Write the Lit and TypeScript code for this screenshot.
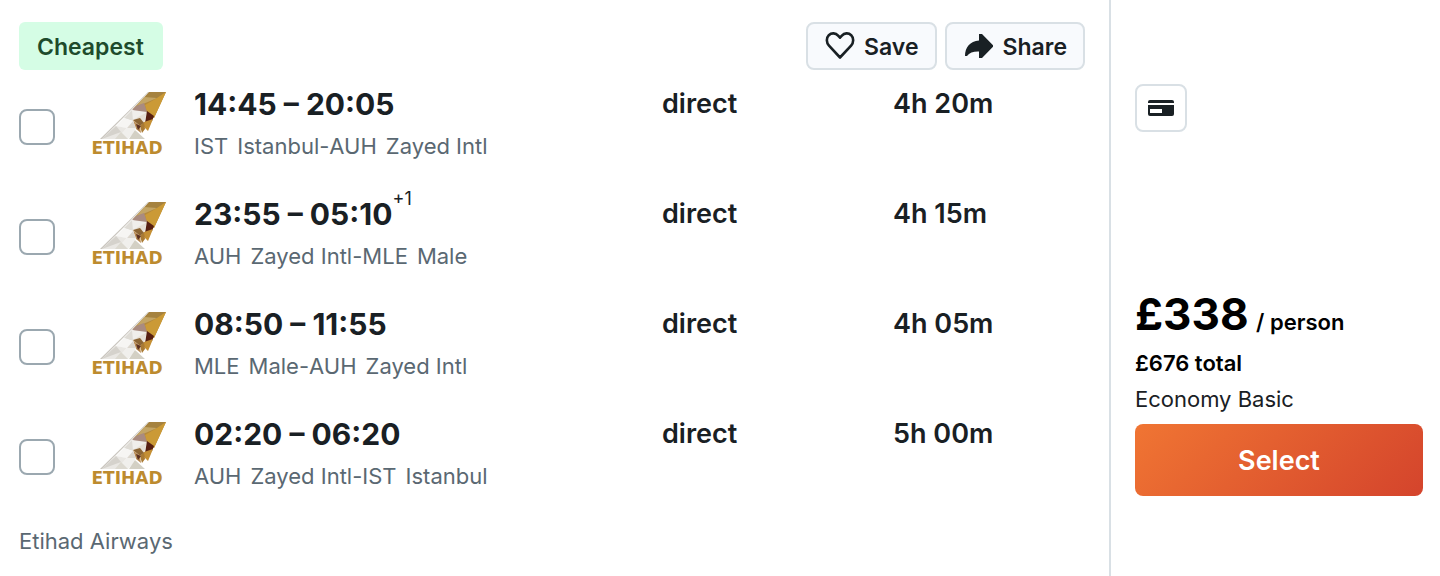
import { LitElement, html, css, svg, nothing } from "lit";
import { customElement, property } from "lit/decorators.js";

interface Leg {
  depart: string;
  arrive: string;
  plusDays?: number;
  from: string[];
  to: string[];
  duration: string;
}

const LEGS: Leg[] = [
  { depart: "14:45", arrive: "20:05", from: ["IST", "Istanbul"], to: ["AUH", "Zayed Intl"], duration: "4h 20m" },
  { depart: "23:55", arrive: "05:10", plusDays: 1, from: ["AUH", "Zayed Intl"], to: ["MLE", "Male"], duration: "4h 15m" },
  { depart: "08:50", arrive: "11:55", from: ["MLE", "Male"], to: ["AUH", "Zayed Intl"], duration: "4h 05m" },
  { depart: "02:20", arrive: "06:20", from: ["AUH", "Zayed Intl"], to: ["IST", "Istanbul"], duration: "5h 00m" },
];

// Facets of the airline's tail fin: [points, fill]
const FACETS: [string, string][] = [
  ["62,0 79,0 67,26 60,22 58,17 46,17", "#b5893c"],
  ["62,0 79,0 70,6 57,7 61,1", "#a5823f"],
  ["57,5 70,6 56,12 49,14", "#c3a566"],
  ["79,0 67,26 60,20 58,13 70,6", "#cb9a36"],
  ["49,14 57,11 60,20 50,20 45,18", "#a98b80"],
  ["45,18 60,20 46,29 37,26", "#f0eeeb"],
  ["45,18 46,29 37,26", "#dedbd5"],
  ["60,20 57,31 46,28", "#e6dfd6"],
  ["60,19 67,24 65,29 58,31", "#571f12"],
  ["57,30 66,27 61,39 57,35", "#c48f34"],
  ["46,28 53,26 57,31 53,34", "#8c6534"],
  ["53,34 57,30 58,37 55,41", "#a97a33"],
  ["46,28 53,34 54,41 49,37", "#b98c55"],
  ["49,32 54,34 51,38", "#5c3020"],
  ["37,26 46,29 40,36 29,34", "#f6f5f3"],
  ["46,29 49,36 40,36", "#dcd7cf"],
  ["29,34 40,36 30,47 15,47", "#e9e7e3"],
  ["29,34 34,40 15,47", "#d5d2cc"],
  ["40,36 49,36 45,43 41,47 30,47", "#f0efec"],
  ["34,40 41,47 28,47", "#dcd9d0"],
  ["48,38 58,47 42,47", "#d3d0c4"],
  ["62,0 61,0 13,47 15,47", "#c9c5be"],
];

@customElement("airline-logo")
class AirlineLogo extends LitElement {
  static styles = css`
    :host { display: block; }
    .logo { display: block; width: 80px; height: 70px; }
    .word { font: 700 17px "DejaVu Sans", sans-serif; fill: #bd8b2f; }
  `;
  render() {
    return html`<svg class="logo" viewBox="0 0 80 70" role="img" aria-label="Etihad">
      ${FACETS.map(([points, fill]) => svg`<polygon points=${points} fill=${fill}></polygon>`)}
      <text class="word" x="40" y="62" text-anchor="middle">ETIHAD</text>
    </svg>`;
  }
}

@customElement("flight-leg")
class FlightLeg extends LitElement {
  @property({ attribute: false }) leg!: Leg;

  static styles = css`
    :host { display: block; }
    .leg {
      display: grid;
      grid-template-columns: 36px 112px minmax(0, 1fr) 231px 192px;
      padding: 11px 0 15px;
    }
    .pick {
      appearance: none;
      box-sizing: border-box;
      width: 36px;
      height: 36px;
      margin: 26px 0 0;
      border: 2px solid #9ba8b0;
      border-radius: 8px;
      background: #fff;
    }
    .pick:checked { background: #192024; }
    .brand { margin: 9px 0 0 32px; }
    .info { padding-left: 27px; }
    .line { height: 42px; line-height: 42px; color: #192024; white-space: nowrap; }
    .times { font-size: 30px; font-weight: 700; }
    .fact { font-size: 27px; font-weight: 600; }
    .plus { font-size: 18px; font-weight: 400; line-height: 0; vertical-align: 20px; }
    .route { display: flex; font-size: 22px; color: #5a6872; }
    .place { display: flex; gap: 9px; }
  `;

  render() {
    const { depart, arrive, plusDays, from, to, duration } = this.leg;
    return html`<div class="leg">
      <input class="pick" type="checkbox" aria-label="Select flight ${depart} – ${arrive}" />
      <airline-logo class="brand"></airline-logo>
      <div class="info">
        <div class="line times">${depart} – ${arrive}${plusDays ? html`<sup class="plus">+${plusDays}</sup>` : nothing}</div>
        <div class="line route">
          <span class="place">${from.map((t) => html`<span>${t}</span>`)}</span>-<span class="place">${to.map((t) => html`<span>${t}</span>`)}</span>
        </div>
      </div>
      <div class="line fact">direct</div>
      <div class="line fact">${duration}</div>
    </div>`;
  }
}

@customElement("app-root")
class AppRoot extends LitElement {
  static styles = css`
    :host {
      display: block;
      font-family: Inter, "Liberation Sans", sans-serif;
      color: #192024;
      background: #fff;
    }
    button { font: inherit; color: inherit; cursor: pointer; box-sizing: border-box; }
    .card { display: grid; grid-template-columns: minmax(0, 1fr) 331px; min-height: 100vh; }
    .main { padding: 22px 24px 0 19px; }
    .head { display: flex; align-items: center; gap: 8px; height: 48px; margin-bottom: 2px; }
    .badge {
      margin-right: auto;
      padding: 2px 19px 0 18px;
      line-height: 46px;
      border-radius: 6px;
      background: #d5fde5;
      color: #1e4b2c;
      font-size: 23px;
      font-weight: 600;
    }
    .action {
      display: flex;
      align-items: center;
      gap: 8px;
      height: 48px;
      padding: 0 16px;
      border: 2px solid #d9e0e5;
      border-radius: 8px;
      background: #f8fafd;
      font-size: 23px;
      font-weight: 600;
    }
    .action span { padding-top: 2px; }
    .glyph { display: block; flex: none; }
    .carrier { margin: 11px 0 0; line-height: 36px; font-size: 22px; color: #5a6872; }
    .side {
      display: flex;
      flex-direction: column;
      justify-content: space-between;
      border-left: 2px solid #d9e0e5;
      padding: 84px 17px 80px 24px;
    }
    .payment {
      display: grid;
      place-items: center;
      width: 52px;
      height: 48px;
      padding: 0;
      border: 2px solid #d9e0e5;
      border-radius: 8px;
      background: #fff;
    }
    .price { margin: 0; color: #000; font-weight: 600; font-size: 22px; line-height: 46px; white-space: nowrap; }
    .amount { font-size: 44px; font-weight: 700; margin-right: 2px; }
    .total { margin: 0; color: #000; font-weight: 600; font-size: 22px; line-height: 36px; }
    .fare { margin: 0; font-size: 22px; line-height: 36px; }
    .select {
      display: block;
      width: 100%;
      height: 72px;
      margin-top: 7px;
      border: 0;
      border-radius: 8px;
      background: linear-gradient(135deg, #f07533, #d4442c);
      color: #fff;
      font-size: 27px;
      font-weight: 600;
    }
  `;

  render() {
    return html`<article class="card">
      <section class="main">
        <header class="head">
          <span class="badge">Cheapest</span>
          <button class="action" type="button">
            <svg class="glyph" width="32" height="32" viewBox="0 0 32 32" aria-hidden="true">
              <path d="M16 27.500 5 15.600C2.200 12.600 2.100 8 4.800 5.200 7.500 2.600 11.700 2.900 14.100 5.600L16 7.700l1.900-2.100c2.400-2.700 6.600-3 9.300-.4 2.700 2.800 2.600 7.400-.1 10.400Z" fill="none" stroke="#192024" stroke-width="2.600" stroke-linejoin="round"></path>
            </svg>
            <span>Save</span>
          </button>
          <button class="action" type="button">
            <svg class="glyph" width="32" height="32" viewBox="0 0 32 32" aria-hidden="true">
              <path d="M16 4h3L30 15.200v1.600L19 28h-3v-6.500C10.500 21.300 6.500 22.500 4 26H2C2 17.500 7 11.300 16 10.500Z" fill="#192024"></path>
            </svg>
            <span>Share</span>
          </button>
        </header>
        ${LEGS.map((leg) => html`<flight-leg .leg=${leg}></flight-leg>`)}
        <p class="carrier">Etihad Airways</p>
      </section>
      <aside class="side">
        <button class="payment" type="button" aria-label="Payment methods">
          <svg class="glyph" width="26" height="16" viewBox="0 0 26 16" aria-hidden="true">
            <path d="M2 0h22a2 2 0 0 1 2 2v1H0V2a2 2 0 0 1 2-2Z" fill="#192024"></path>
            <path d="M0 5h26v9a2 2 0 0 1-2 2H2a2 2 0 0 1-2-2Z" fill="#192024"></path>
            <path d="M2 9h12v4H2Z" fill="#fff"></path>
          </svg>
        </button>
        <div>
          <p class="price"><span class="amount">£338</span> / person</p>
          <p class="total">£676 total</p>
          <p class="fare">Economy Basic</p>
          <button class="select" type="button">Select</button>
        </div>
      </aside>
    </article>`;
  }
}
